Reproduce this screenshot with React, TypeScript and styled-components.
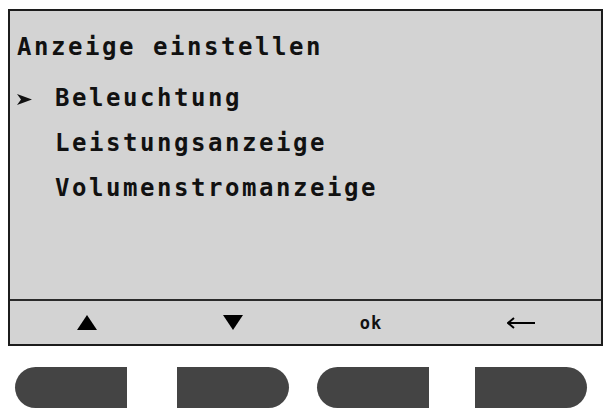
import React from "react";
import styled, { createGlobalStyle } from "styled-components";

const Global = createGlobalStyle`
  html, body { margin: 0; padding: 0; background: #ffffff; }
  body { font-family: "DejaVu Sans Mono", "Liberation Mono", monospace; }
`;

const Page = styled.div`
  width: 606px;
  height: 412px;
  padding: 9px 0 0 8px;
  box-sizing: border-box;
  display: flex;
  flex-direction: column;
`;

const Screen = styled.div`
  width: 595px;
  height: 337px;
  box-sizing: border-box;
  border: 2px solid #1c1c1c;
  background: #d3d3d3;
  display: flex;
  flex-direction: column;
`;

const Content = styled.div`
  flex: 1;
  padding: 16px 0 0 7px;
  display: flex;
  flex-direction: column;
`;

const Title = styled.div`
  font-family: "DejaVu Sans Mono", monospace;
  font-weight: bold;
  font-size: 24px;
  letter-spacing: 2.55px;
  line-height: 40px;
  height: 40px;
  color: #111;
  margin-bottom: 9px;
  white-space: nowrap;
`;

const Item = styled.div`
  display: flex;
  align-items: center;
  height: 45px;
  font-family: "DejaVu Sans Mono", monospace;
  font-weight: bold;
  font-size: 24px;
  letter-spacing: 2.55px;
  line-height: 45px;
  color: #111;
  white-space: nowrap;
`;

const Marker = styled.span<{ $visible: boolean }>`
  width: 38px;
  flex: none;
  display: flex;
  align-items: center;
  visibility: ${(p) => (p.$visible ? "visible" : "hidden")};
  padding-top: 2px;
`;

const Footer = styled.div`
  height: 43px;
  border-top: 2px solid #2a2a2a;
  display: grid;
  grid-template-columns: 154px 138px 138px 1fr;
  align-items: center;
  justify-items: center;
`;

const SoftKey = styled.div`
  display: flex;
  align-items: center;
  justify-content: center;
  font-family: "DejaVu Sans Mono", monospace;
  font-weight: bold;
  font-size: 17px;
  letter-spacing: 1px;
  color: #111;
`;

const ButtonRow = styled.div`
  display: flex;
  gap: 28px;
  margin-top: 21px;
  padding-left: 7px;
`;

const ButtonPair = styled.div<{ $gap: number }>`
  display: flex;
  gap: ${(p) => p.$gap}px;
`;

const HwButton = styled.div<{ $round: "left" | "right" }>`
  width: 112px;
  height: 41px;
  background: #444444;
  border-radius: ${(p) => (p.$round === "left" ? "21px 0 0 21px" : "0 21px 21px 0")};
`;

const Chevron = () => (
  <svg width="15" height="11" viewBox="0 0 15 11">
    <path d="M0 0 L15 5.5 L0 11 L4 5.5 Z" fill="#111" />
  </svg>
);

const Up = () => (
  <svg width="20" height="15" viewBox="0 0 20 15">
    <path d="M10 0 L20 15 L0 15 Z" fill="#000" />
  </svg>
);

const Down = () => (
  <svg width="20" height="15" viewBox="0 0 20 15">
    <path d="M0 0 L20 0 L10 15 Z" fill="#000" />
  </svg>
);

const Back = () => (
  <svg width="28" height="12" viewBox="0 0 28 12">
    <path d="M1 6 H28 M7 1 L1 6 L7 11" stroke="#000" strokeWidth="2" fill="none" />
  </svg>
);

const items = ["Beleuchtung", "Leistungsanzeige", "Volumenstromanzeige"];

export default function App() {
  return (
    <>
      <Global />
      <Page>
        <Screen>
          <Content>
            <Title>Anzeige einstellen</Title>
            {items.map((t, i) => (
              <Item key={t}>
                <Marker $visible={i === 0}>
                  <Chevron />
                </Marker>
                {t}
              </Item>
            ))}
          </Content>
          <Footer>
            <SoftKey>
              <Up />
            </SoftKey>
            <SoftKey>
              <Down />
            </SoftKey>
            <SoftKey>ok</SoftKey>
            <SoftKey>
              <Back />
            </SoftKey>
          </Footer>
        </Screen>
        <ButtonRow>
          <ButtonPair $gap={50}>
            <HwButton $round="left" />
            <HwButton $round="right" />
          </ButtonPair>
          <ButtonPair $gap={46}>
            <HwButton $round="left" />
            <HwButton $round="right" />
          </ButtonPair>
        </ButtonRow>
      </Page>
    </>
  );
}
